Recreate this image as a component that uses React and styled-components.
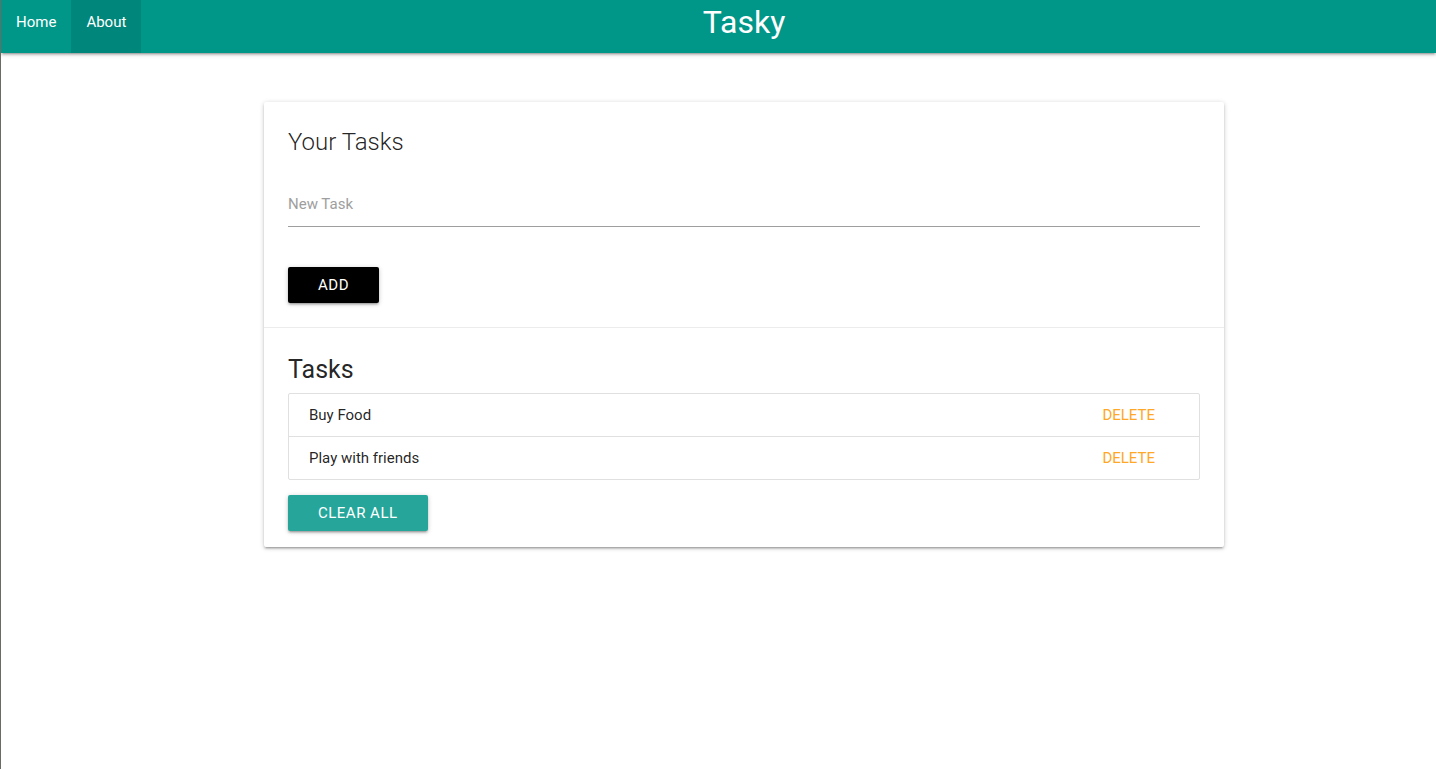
import React, { useState } from "react";
import styled, { createGlobalStyle } from "styled-components";

const GlobalStyle = createGlobalStyle`
  * { box-sizing: border-box; }
  body {
    margin: 0;
    font-family: Roboto, "Liberation Sans", sans-serif;
    font-size: 15px;
    color: rgba(0, 0, 0, 0.87);
    background: #fff;
    border-left: 1px solid #6b6b66;
    min-height: 100vh;
  }
`;

export default function App() {
  const [tasks, setTasks] = useState(["Buy Food", "Play with friends"]);
  const [text, setText] = useState("");

  const addTask = () => {
    if (!text.trim()) return;
    setTasks((prev) => [...prev, text.trim()]);
    setText("");
  };

  const removeTask = (index) => {
    setTasks((prev) => prev.filter((_, i) => i !== index));
  };

  return (
    <>
      <GlobalStyle />
      <Nav>
        <NavLinks>
          <NavLink href="#">Home</NavLink>
          <NavLink href="#" active>
            About
          </NavLink>
        </NavLinks>
        <Brand>Tasky</Brand>
        <div />
      </Nav>

      <Main>
        <Card>
          <TopSection>
            <CardTitle>Your Tasks</CardTitle>
            <Input
              type="text"
              placeholder="New Task"
              value={text}
              onChange={(e) => setText(e.target.value)}
            />
            <Button dark onClick={addTask}>
              ADD
            </Button>
          </TopSection>
          <BottomSection>
            <ListTitle>Tasks</ListTitle>
            <Collection>
              {tasks.map((task, i) => (
                <CollectionItem key={i}>
                  <span>{task}</span>
                  <DeleteLink onClick={() => removeTask(i)}>DELETE</DeleteLink>
                </CollectionItem>
              ))}
            </Collection>
            <Button onClick={() => setTasks([])}>CLEAR ALL</Button>
          </BottomSection>
        </Card>
      </Main>
    </>
  );
}

const Nav = styled.nav`
  height: 53px;
  background: #009688;
  color: #fff;
  display: grid;
  grid-template-columns: 1fr auto 1fr;
  align-items: stretch;
  box-shadow: 0 2px 2px 0 rgba(0, 0, 0, 0.14), 0 3px 1px -2px rgba(0, 0, 0, 0.12),
    0 1px 5px 0 rgba(0, 0, 0, 0.2);
`;

const NavLinks = styled.div`
  display: flex;
`;

const NavLink = styled.a`
  display: flex;
  align-items: center;
  padding: 0 15px 10px;
  color: #fff;
  text-decoration: none;
  font-size: 15px;
  background: ${(p) => (p.active ? "rgba(0, 0, 0, 0.1)" : "transparent")};
`;

const Brand = styled.div`
  margin-left: 51px;
  font-size: 32px;
  line-height: 44px;
  padding-bottom: 9px;
  color: #fff;
`;

const Main = styled.main`
  padding: 49px 0 0 51px;
  display: flex;
  justify-content: center;
`;

const Card = styled.div`
  width: 960px;
  background: #fff;
  border-radius: 2px;
  box-shadow: 0 2px 2px 0 rgba(0, 0, 0, 0.14), 0 3px 1px -2px rgba(0, 0, 0, 0.12),
    0 1px 5px 0 rgba(0, 0, 0, 0.2);
`;

const TopSection = styled.div`
  padding: 24px 24px 24px;
  border-bottom: 1px solid rgba(160, 160, 160, 0.2);
  display: flex;
  flex-direction: column;
  align-items: flex-start;
`;

const CardTitle = styled.h2`
  margin: 0;
  font-size: 24px;
  font-weight: 300;
  line-height: 32px;
`;

const Input = styled.input`
  width: 100%;
  height: 49px;
  margin: 20px 0 40px;
  padding: 4px 0 0;
  border: none;
  border-bottom: 1px solid #9e9e9e;
  outline: none;
  background: transparent;
  font-family: inherit;
  font-size: 15px;
  color: rgba(0, 0, 0, 0.87);
  &::placeholder {
    color: #9e9e9e;
  }
`;

const Button = styled.button`
  height: 36px;
  padding: 0 30px;
  border: none;
  border-radius: 2px;
  background: ${(p) => (p.dark ? "#000" : "#26a69a")};
  color: #fff;
  font-family: inherit;
  font-size: 15px;
  letter-spacing: 0.5px;
  cursor: pointer;
  box-shadow: 0 2px 2px 0 rgba(0, 0, 0, 0.14), 0 3px 1px -2px rgba(0, 0, 0, 0.12),
    0 1px 5px 0 rgba(0, 0, 0, 0.2);
`;

const BottomSection = styled.div`
  padding: 26px 24px 16px;
  display: flex;
  flex-direction: column;
  align-items: flex-start;
`;

const ListTitle = styled.h3`
  margin: 0 0 7px;
  font-size: 25px;
  font-weight: 400;
  line-height: 32px;
`;

const Collection = styled.ul`
  width: 100%;
  margin: 0 0 15px;
  padding: 0;
  list-style: none;
  border: 1px solid #e0e0e0;
  border-radius: 2px;
`;

const CollectionItem = styled.li`
  display: flex;
  justify-content: space-between;
  align-items: center;
  height: 43px;
  padding: 0 44px 0 20px;
  font-size: 15px;
  border-bottom: 1px solid #e0e0e0;
  &:last-child {
    border-bottom: none;
    height: 42px;
  }
`;

const DeleteLink = styled.a`
  color: #ffa726;
  font-size: 15px;
  cursor: pointer;
`;
